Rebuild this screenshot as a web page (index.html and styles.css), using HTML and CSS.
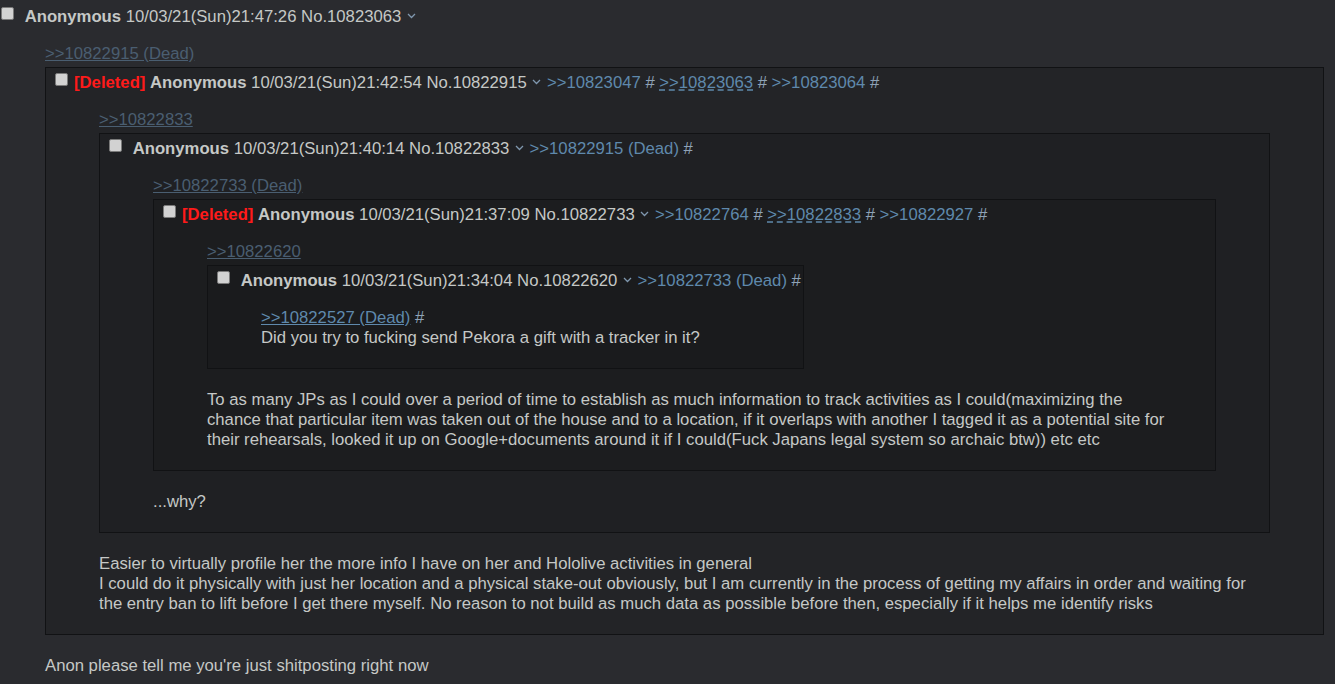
FILE: index.html
```html
<!DOCTYPE html>
<html lang="en">
<head>
    <meta charset="UTF-8">
    <title>Thread - 10823063</title>
    <link rel="stylesheet" href="styles.css">
</head>
<body>
    <div class="post top">
        <div class="post-info">
            <span class="checkbox"></span> <span class="name">Anonymous</span> <span class="date">10/03/21(Sun)21:47:26</span> <span class="num">No.10823063</span> <svg class="menu" width="9" height="6" viewBox="0 0 9 6"><path d="M1 1l3.5 3.5L8 1" fill="none" stroke="#7f97ae" stroke-width="1.3"/></svg>
        </div>
        <div class="message">
            <a class="quote faded">&gt;&gt;10822915 (Dead)</a>

            <div class="post inline lvl1">
                <div class="post-info">
                    <span class="checkbox"></span><span class="deleted">[Deleted]</span> <span class="name">Anonymous</span> <span class="date">10/03/21(Sun)21:42:54</span> <span class="num">No.10822915</span> <svg class="menu" width="9" height="6" viewBox="0 0 9 6"><path d="M1 1l3.5 3.5L8 1" fill="none" stroke="#7f97ae" stroke-width="1.3"/></svg>
                    <a class="backlink">&gt;&gt;10823047</a> <a class="hash">#</a>
                    <a class="backlink current">&gt;&gt;10823063</a> <a class="hash">#</a>
                    <a class="backlink">&gt;&gt;10823064</a> <a class="hash">#</a>
                </div>
                <div class="message">
                    <a class="quote faded">&gt;&gt;10822833</a>

                    <div class="post inline lvl2">
                        <div class="post-info">
                            <span class="checkbox"></span> <span class="name">Anonymous</span> <span class="date">10/03/21(Sun)21:40:14</span> <span class="num">No.10822833</span> <svg class="menu" width="9" height="6" viewBox="0 0 9 6"><path d="M1 1l3.5 3.5L8 1" fill="none" stroke="#7f97ae" stroke-width="1.3"/></svg>
                            <a class="backlink">&gt;&gt;10822915 (Dead)</a> <a class="hash">#</a>
                        </div>
                        <div class="message">
                            <a class="quote faded">&gt;&gt;10822733 (Dead)</a>

                            <div class="post inline lvl3">
                                <div class="post-info">
                                    <span class="checkbox"></span><span class="deleted">[Deleted]</span> <span class="name">Anonymous</span> <span class="date">10/03/21(Sun)21:37:09</span> <span class="num">No.10822733</span> <svg class="menu" width="9" height="6" viewBox="0 0 9 6"><path d="M1 1l3.5 3.5L8 1" fill="none" stroke="#7f97ae" stroke-width="1.3"/></svg>
                                    <a class="backlink">&gt;&gt;10822764</a> <a class="hash">#</a>
                                    <a class="backlink current">&gt;&gt;10822833</a> <a class="hash">#</a>
                                    <a class="backlink">&gt;&gt;10822927</a> <a class="hash">#</a>
                                </div>
                                <div class="message">
                                    <a class="quote faded">&gt;&gt;10822620</a>

                                    <div class="post inline lvl4">
                                        <div class="post-info">
                                            <span class="checkbox"></span> <span class="name">Anonymous</span> <span class="date">10/03/21(Sun)21:34:04</span> <span class="num">No.10822620</span> <svg class="menu" width="9" height="6" viewBox="0 0 9 6"><path d="M1 1l3.5 3.5L8 1" fill="none" stroke="#7f97ae" stroke-width="1.3"/></svg>
                                            <a class="backlink">&gt;&gt;10822733 (Dead)</a> <a class="hash">#</a>
                                        </div>
                                        <div class="message">
                                            <a class="quote">&gt;&gt;10822527 (Dead)</a> <a class="hash">#</a><br>
                                            Did you try to fucking send Pekora a gift with a tracker in it?
                                        </div>
                                    </div>

                                    To as many JPs as I could over a period of time to establish as much information to track activities as I could(maximizing the chance that particular item was taken out of the house and to a location, if it overlaps with another I tagged it as a potential site for their rehearsals, looked it up on Google+documents around it if I could(Fuck Japans legal system so archaic btw)) etc etc
                                </div>
                            </div>

                            ...why?
                        </div>
                    </div>

                    Easier to virtually profile her the more info I have on her and Hololive activities in general<br>
                    I could do it physically with just her location and a physical stake-out obviously, but I am currently in the process of getting my affairs in order and waiting for the entry ban to lift before I get there myself. No reason to not build as much data as possible before then, especially if it helps me identify risks
                </div>
            </div>

            Anon please tell me you're just shitposting right now
        </div>
    </div>
</body>
</html>
```

FILE: styles.css
```css
body {
    margin: 0;
    background-color: #2a2b2f;
    color: #c5c8c6;
    font-family: "Liberation Sans", Arial, sans-serif;
    font-size: 16.7px;
    line-height: 20px;
    overflow: hidden;
}
a {
    cursor: pointer;
}
.post {
    padding: 5px 2px 7px 9px;
}
.post.top {
    padding: 7px 11px 0 1px;
}
.post.inline {
    width: fit-content;
    border: 1px solid #111214;
    margin: 3px 0 21px;
}
.lvl1 { background-color: #232427; }
.lvl2 { background-color: #1f2023; }
.lvl3 { background-color: #1c1d1f; }
.lvl4 { background-color: #1a1b1d; }
.post-info {
    white-space: nowrap;
}
.checkbox {
    display: inline-block;
    vertical-align: top;
    box-sizing: border-box;
    width: 13px;
    height: 13px;
    margin-right: 6px;
    background-color: #d2d2d2;
    border: 1px solid #7a7a7a;
    border-radius: 2px;
}
.deleted {
    color: #ff1a1a;
    font-weight: bold;
}
.name {
    font-weight: bold;
}
.menu {
    vertical-align: 3px;
    margin: 0 1px;
}
.backlink {
    color: #5f89ac;
}
.backlink.current {
    text-decoration: underline dashed;
    text-underline-offset: 2px;
}
.hash {
    color: #8fa3b7;
}
.message {
    margin: 17px 51px 13px 44px;
}
/* the wider line in this post needs a few more px than the others */
.lvl3 > .message {
    margin-right: 46px;
}
.post.top > .message {
    margin-right: 0;
    margin-top: 17px;
}
.quote {
    color: #5f89ac;
    text-decoration: underline;
}
.quote.faded {
    display: block;
    width: fit-content;
    color: #4a5e71;
}
```
